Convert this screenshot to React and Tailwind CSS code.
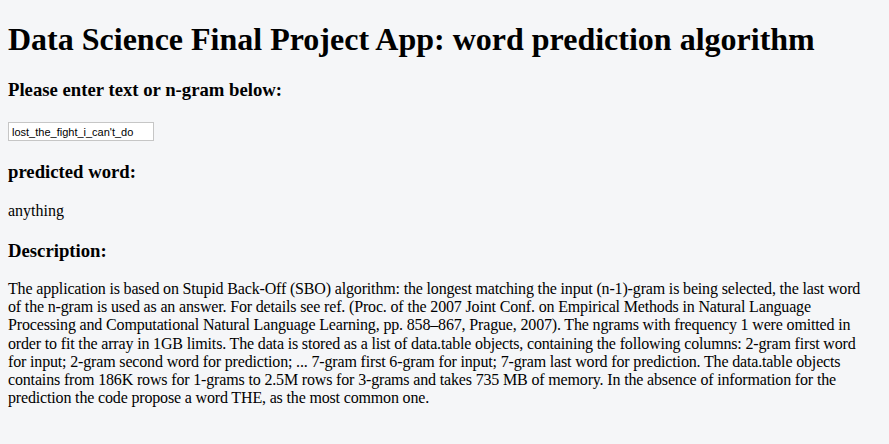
export default function App() {
  return (
    <div className="min-h-[444px] bg-[#f5f6f8] px-2 pt-[21px] pb-4 text-black" style={{ fontFamily: '"Liberation Serif", "Times New Roman", serif' }}>
      <h1 className="text-[32px] font-bold leading-[37px]">Data Science Final Project App: word prediction algorithm</h1>
      <h3 className="mt-[21px] text-[18.72px] font-bold leading-[22px]">Please enter text or n-gram below:</h3>
      <input
        type="text"
        defaultValue="lost_the_fight_i_can't_do"
        className="mt-[21px] block h-[19px] w-[146px] border border-[#c6c6c6] bg-white px-[3px] text-[11px] leading-[17px] text-black outline-none"
        style={{ fontFamily: '"Liberation Sans", Arial, sans-serif' }}
      />
      <h3 className="mt-[20px] text-[18.72px] font-bold leading-[22px]">predicted word:</h3>
      <p className="mt-[19px] text-[16px] leading-[18px]">anything</p>
      <h3 className="mt-[20px] text-[18.72px] font-bold leading-[22px]">Description:</h3>
      <p className="mt-[18px] whitespace-nowrap text-[16px] leading-[18.2px] tracking-[-0.16px]">
        The application is based on Stupid Back-Off (SBO) algorithm: the longest matching the input (n-1)-gram is being selected, the last word
        <br />
        of the n-gram is used as an answer. For details see ref. (Proc. of the 2007 Joint Conf. on Empirical Methods in Natural Language
        <br />
        Processing and Computational Natural Language Learning, pp. 858–867, Prague, 2007). The ngrams with frequency 1 were omitted in
        <br />
        order to fit the array in 1GB limits. The data is stored as a list of data.table objects, containing the following columns: 2-gram first word
        <br />
        for input; 2-gram second word for prediction; ... 7-gram first 6-gram for input; 7-gram last word for prediction. The data.table objects
        <br />
        contains from 186K rows for 1-grams to 2.5M rows for 3-grams and takes 735 MB of memory. In the absence of information for the
        <br />
        prediction the code propose a word THE, as the most common one.
      </p>
    </div>
  );
}
